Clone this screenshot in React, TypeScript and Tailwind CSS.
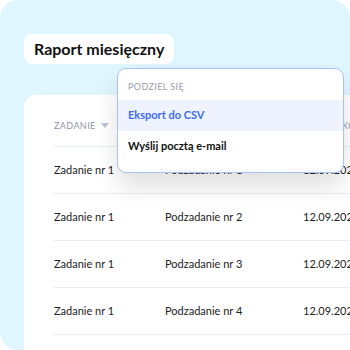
const rows = [
	{ task: "Zadanie nr 1", sub: "Podzadanie nr 1", date: "12.09.2023" },
	{ task: "Zadanie nr 1", sub: "Podzadanie nr 2", date: "12.09.2023" },
	{ task: "Zadanie nr 1", sub: "Podzadanie nr 3", date: "12.09.2023" },
	{ task: "Zadanie nr 1", sub: "Podzadanie nr 4", date: "12.09.2023" },
];

const App = () => {
	return (
		<div className="w-[350px] h-[350px] bg-white font-['Lato',sans-serif]">
			<div className="relative w-full h-full bg-[#e0f6fe] rounded-[18px] overflow-hidden flex flex-col pl-[24px] pt-[34px]">
				<div className="self-start whitespace-nowrap bg-white rounded-[8px] h-[30px] px-[10px] flex items-center text-[16px] font-bold text-[#111]">
					Raport miesięczny
				</div>

				<div className="mt-[31px] flex-1 bg-white rounded-tl-[12px] pl-[30px] overflow-hidden">
					<div className="flex items-center h-[52px] pt-[10px] border-b border-[#e6ecf5] text-[9px] uppercase tracking-[0.4px] text-[#8f93a8] whitespace-nowrap">
						<div className="w-[111px] shrink-0 flex items-center gap-[5px]">
							Zadanie
							<svg width="8" height="5" viewBox="0 0 8 5">
								<path d="M0 0h8L4 5z" fill="#b9c2d6" />
							</svg>
						</div>
						<div className="w-[138px] shrink-0">Podzadanie</div>
						<div className="shrink-0">Data zakończenia</div>
					</div>
					{rows.map((row) => (
						<div
							key={row.sub}
							className="flex items-center h-[47px] border-b border-[#e6ecf5] text-[11px] text-[#222] whitespace-nowrap"
						>
							<div className="w-[111px] shrink-0">{row.task}</div>
							<div className="w-[138px] shrink-0">{row.sub}</div>
							<div className="shrink-0">{row.date}</div>
						</div>
					))}
				</div>

				<div className="absolute left-[117px] top-[68px] w-[227px] bg-white border border-[#a9c0fb] rounded-[9px] shadow-[0_14px_24px_rgba(0,0,0,0.12)] pb-[10px]">
					<div className="h-[31px] pt-[4px] px-[10px] flex items-center text-[9px] uppercase tracking-[0.4px] text-[#9a9eae]">
						Podziel się
					</div>
					<div className="h-[31px] px-[10px] flex items-center bg-[#eef3ff] text-[11px] font-bold text-[#3d6cf2]">
						Eksport do CSV
					</div>
					<div className="h-[31px] px-[10px] flex items-center text-[11px] font-bold text-[#111]">
						Wyślij pocztą e-mail
					</div>
				</div>
			</div>
		</div>
	);
};

export default App;
